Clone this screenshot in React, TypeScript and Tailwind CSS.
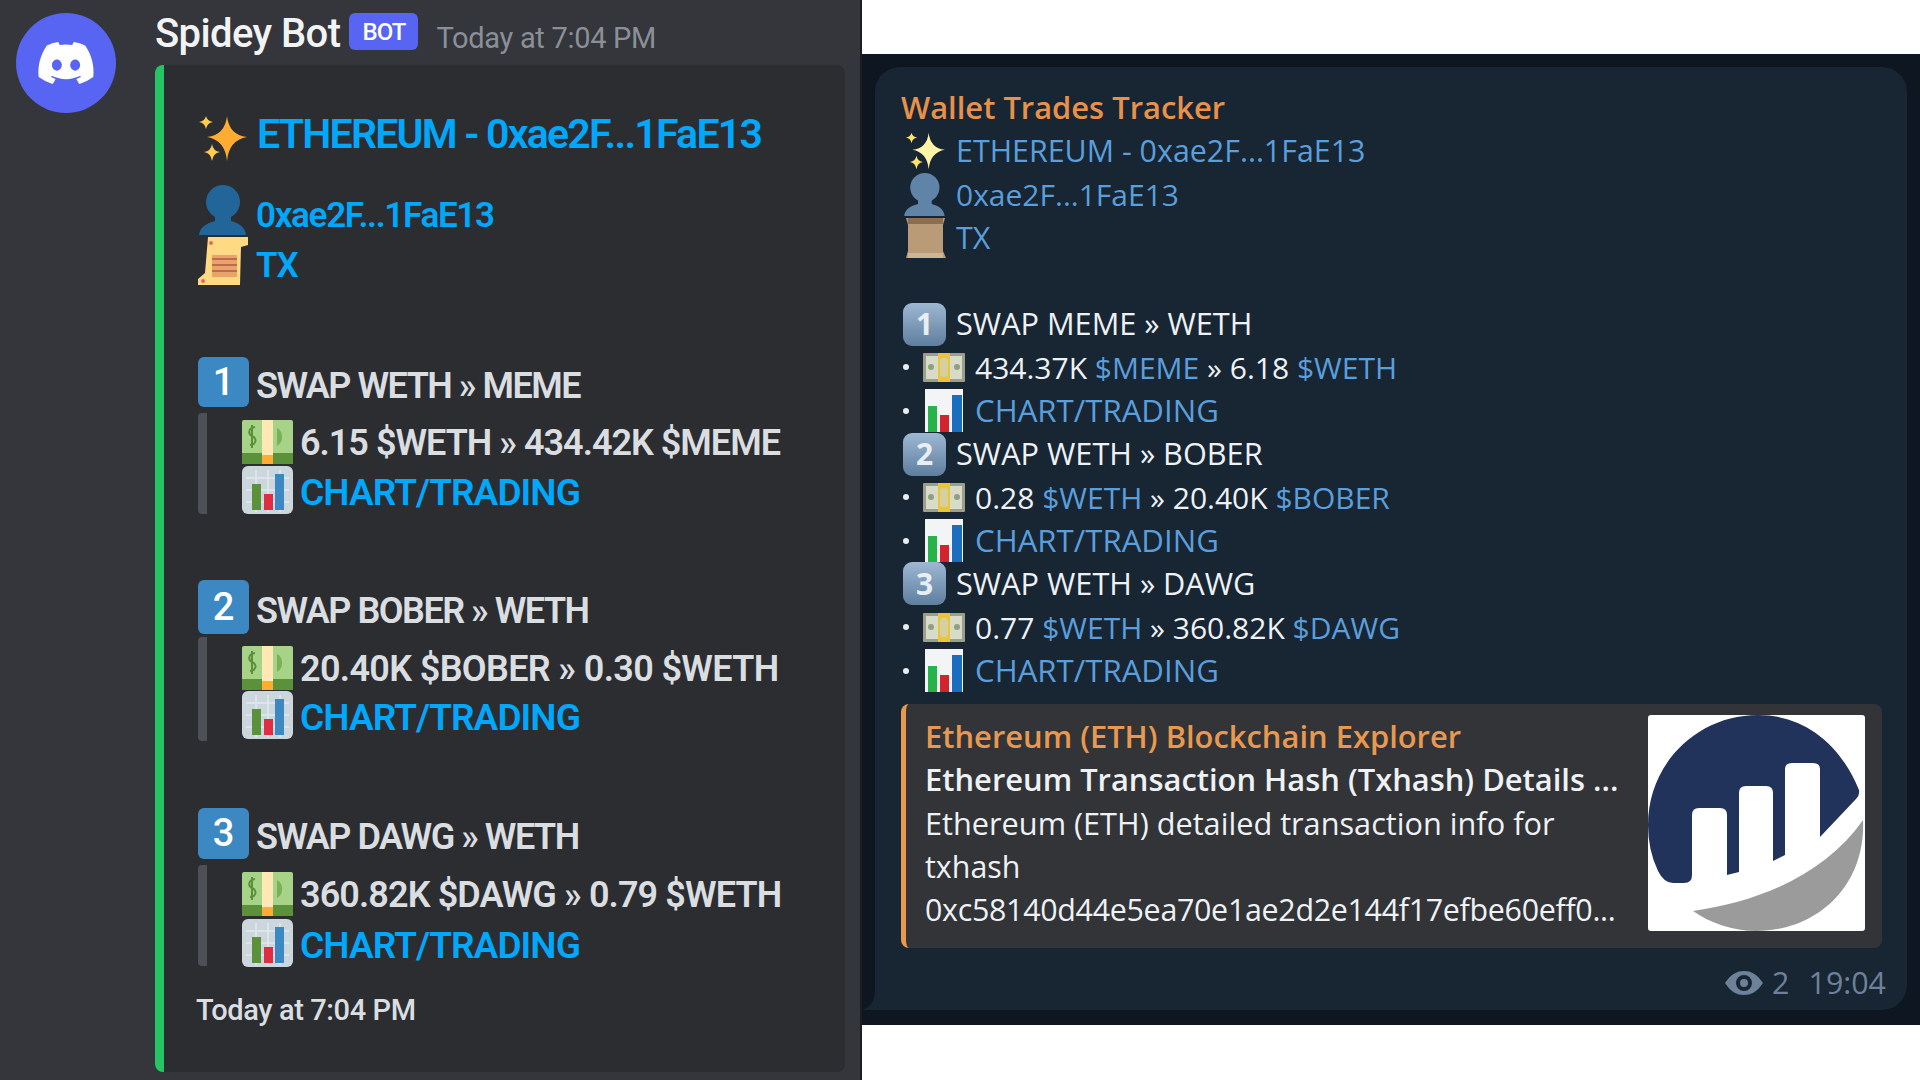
import { FaDiscord } from "react-icons/fa";

const Sparkle = ({ className, small, big }: { className: string; small: string; big: string }) => (
  <svg viewBox="0 0 49 45" className={className}>
    <path d="M29 0 Q31 19 49 21 Q31 24 29 45 Q27 24 9 21 Q27 19 29 0Z" fill={big} />
    <path d="M8 0 Q9 5 15 6 Q9 7 8 13 Q7 7 1 6 Q7 5 8 0Z" fill={small} />
    <path d="M14 28 Q15 35 22 36 Q15 37 14 45 Q13 37 6 36 Q13 35 14 28Z" fill={small} />
  </svg>
);

const Person = ({ className, fill }: { className: string; fill: string }) => (
  <svg viewBox="0 0 48 50" className={className}>
    <ellipse cx="25" cy="17" rx="17" ry="17" fill={fill} />
    <path d="M17 30 H33 V36 C40 38 47 41 48 50 H1 C2 41 10 38 17 36Z" fill={fill} />
  </svg>
);

const DiscordScroll = () => (
  <svg viewBox="0 0 50 52" className="h-[52px] w-[50px] shrink-0">
    <path d="M10 2 H50 V10 L43 12 L42 50 H0 V44 L7 38Z" fill="#ffd983" />
    <path d="M14 20 H39 V42 H14Z" fill="#e7a56b" />
    <path d="M14 24 H39 M14 30 H39 M14 36 H39" stroke="#c1694f" strokeWidth="2" />
    <circle cx="13" cy="8" r="2" fill="#dd6b5a" />
    <circle cx="5" cy="46" r="2" fill="#dd6b5a" />
  </svg>
);

const TgScroll = () => (
  <svg viewBox="0 0 41 42" className="h-[42px] w-[41px] shrink-0">
    <path d="M1 1 H40 L38 8 V34 L41 41 H1 L3 34 V8Z" fill="#b99b78" />
    <path d="M3 1 H38 V7 H3Z" fill="#8a6f53" />
    <path d="M3 36 H38 V41 H3Z" fill="#cdb596" />
  </svg>
);

const Money = () => (
  <svg viewBox="0 0 51 44" className="h-[44px] w-[51px] shrink-0">
    <rect width="51" height="44" rx="2" fill="#a6d388" />
    <rect y="33" width="51" height="11" fill="#5c913b" />
    <rect x="20" width="11" height="44" fill="#ffe8b6" />
    <rect x="20" y="35" width="11" height="9" fill="#ffac33" />
    <path d="M35 8 A9 10 0 0 1 35 26Z" fill="#77b255" />
    <path d="M13 7 C6 8 6 14 10 16 C15 18 15 24 8 25 M10 5 V28" stroke="#5c913b" strokeWidth="2" fill="none" />
  </svg>
);

const DiscordChart = () => (
  <svg viewBox="0 0 51 48" className="h-[48px] w-[51px] shrink-0">
    <rect width="51" height="48" rx="6" fill="#ccd6dd" />
    <path d="M4 12 H47 M4 24 H47 M4 36 H47 M14 4 V46 M26 4 V46 M38 4 V46" stroke="#e1e8ed" strokeWidth="1.5" />
    <rect x="10" y="18" width="9" height="26" fill="#5c913b" />
    <rect x="22" y="28" width="9" height="16" fill="#dd2e44" />
    <rect x="33" y="8" width="9" height="36" fill="#3b88c3" />
  </svg>
);

const TgMoney = () => (
  <svg viewBox="0 0 42 29" className="h-[29px] w-[42px] shrink-0">
    <rect width="42" height="29" rx="1" fill="#9b9f8e" />
    <rect x="3" y="3" width="36" height="23" fill="#d7dbc8" />
    <rect x="15" width="12" height="29" fill="#e8c53a" />
    <rect x="17" y="5" width="8" height="19" rx="3" fill="#d6cfa0" />
    <circle cx="8" cy="14" r="3" fill="#8f9f80" />
    <circle cx="34" cy="14" r="3" fill="#8f9f80" />
  </svg>
);

const TgChart = () => (
  <svg viewBox="0 0 38 43" className="h-[43px] w-[38px] shrink-0">
    <rect width="38" height="43" fill="#f2f4f5" />
    <rect x="3" y="17" width="9" height="26" fill="#27b34a" />
    <rect x="15" y="26" width="9" height="17" fill="#d3232e" />
    <rect x="27" y="6" width="10" height="37" fill="#1a6dbf" />
  </svg>
);

const Eye = () => (
  <svg viewBox="0 0 38 24" className="h-[24px] w-[38px]">
    <path fillRule="evenodd" d="M0 12 C6 3 12 0 19 0 C26 0 32 3 38 12 C32 21 26 24 19 24 C12 24 6 21 0 12Z M19 4 A8 8 0 1 0 19 20 A8 8 0 1 0 19 4Z" fill="#6d8299" />
    <circle cx="19" cy="12" r="4" fill="#6d8299" />
  </svg>
);

const EtherscanLogo = () => (
  <svg viewBox="0 0 217 216" className="h-[216px] w-[217px] shrink-0 rounded-[3px] bg-white">
    <path d="M0 110 C0 48 50 0 110 0 C155 0 192 28 211 75 Q212 80 208 84 L172 122 L172 54 Q172 48 165 48 L144 48 Q137 48 137 54 L137 140 L125 146 L125 78 Q125 71 118 71 L98 71 Q91 71 91 78 L91 157 L79 160 L79 100 Q79 93 72 93 L51 93 Q44 93 44 100 L44 160 Q44 168 36 168 L25 168 Q16 168 10 156 Q0 135 0 110Z" fill="#21325b" />
    <path d="M45 196 C120 185 180 155 215 105 C218 170 170 216 108 216 C85 216 62 208 45 196Z" fill="#9b9b9b" />
  </svg>
);

const discordBlocks = [
  {
    n: "1",
    title: "SWAP WETH » MEME",
    trade: "6.15 $WETH » 434.42K $MEME",
    wrap: "mt-[70px]",
    key: "h-[50px]",
    quote: "mt-[6px] h-[101px] pt-[7px]",
    gap: "mt-[2px]",
    track: "tracking-[-1px]",
  },
  {
    n: "2",
    title: "SWAP BOBER » WETH",
    trade: "20.40K $BOBER » 0.30 $WETH",
    wrap: "mt-[66px]",
    key: "h-[54px]",
    quote: "mt-[3px] h-[104px] pt-[9px]",
    gap: "mt-[1px]",
    track: "tracking-[-0.65px]",
  },
  {
    n: "3",
    title: "SWAP DAWG » WETH",
    trade: "360.82K $DAWG » 0.79 $WETH",
    wrap: "mt-[67px]",
    key: "h-[51px]",
    quote: "mt-[6px] h-[101px] pt-[7px]",
    gap: "mt-[3px]",
    track: "tracking-[-0.9px]",
  },
];

const tgBlocks = [
  { n: "1", title: "SWAP MEME » WETH", a: "434.37K ", at: "$MEME", b: " » 6.18 ", bt: "$WETH" },
  { n: "2", title: "SWAP WETH » BOBER", a: "0.28 ", at: "$WETH", b: " » 20.40K ", bt: "$BOBER" },
  { n: "3", title: "SWAP WETH » DAWG", a: "0.77 ", at: "$WETH", b: " » 360.82K ", bt: "$DAWG" },
];

function DiscordPanel() {
  return (
    <div className="flex h-[1080px] w-[862px] shrink-0 gap-[39px] border-r-2 border-[#1c1d20] bg-[#34363b] pl-4 pt-[13px] font-['Roboto',sans-serif] text-[#dbdee1]">
      <div className="flex h-[100px] w-[100px] shrink-0 items-center justify-center rounded-full bg-[#5865f2] text-white">
        <FaDiscord className="h-[60px] w-[60px]" />
      </div>
      <div className="flex flex-col">
        <div className="flex h-[52px] items-start">
          <span className="mt-[1px] text-[40px] font-medium leading-[40px] tracking-[-0.6px] text-[#f2f3f5]">Spidey Bot</span>
          <span className="ml-[9px] flex h-[37px] w-[69px] items-center justify-center rounded-[6px] bg-[#5865f2] text-[24px] font-medium tracking-[-1px] text-white">BOT</span>
          <span className="ml-[18px] mt-[5px] text-[29px] leading-[40px] tracking-[-0.3px] text-[#8b9098]">Today at 7:04 PM</span>
        </div>
        <div className="flex h-[1007px] w-[690px] flex-col rounded-[8px] border-l-[9px] border-[#25c565] bg-[#2b2d31] pl-[34px] pt-[51px]">
          <div className="flex h-[45px] items-center gap-[10px]">
            <Sparkle className="h-[45px] w-[49px] shrink-0" small="#ffcc4d" big="#ffac33" />
            <span className="mb-[8px] whitespace-nowrap text-[41px] font-semibold tracking-[-1.75px] text-[#00a8fc]">ETHEREUM - 0xae2F...1FaE13</span>
          </div>
          <div className="mt-[24px] flex h-[50px] items-center gap-[10px]">
            <Person className="h-[50px] w-[48px] shrink-0" fill="#226699" />
            <span className="mt-[12px] text-[35px] font-semibold tracking-[-1.3px] text-[#00a8fc]">0xae2F...1FaE13</span>
          </div>
          <div className="flex h-[52px] items-center gap-[8px]">
            <DiscordScroll />
            <span className="mt-[10px] text-[35px] font-semibold tracking-[-1px] text-[#00a8fc]">TX</span>
          </div>
          {discordBlocks.map((b) => (
            <div key={b.n} className={b.wrap}>
              <div className={`flex items-center gap-[7px] ${b.key}`}>
                <div className="flex h-full w-[51px] shrink-0 items-center justify-center rounded-[6px] bg-[#3b88c3] text-[38px] font-medium text-white">{b.n}</div>
                <span className="mt-[7px] text-[36px] font-semibold tracking-[-1.5px]">{b.title}</span>
              </div>
              <div className={`flex flex-col rounded-[4px] border-l-[9px] border-[#4e5058] pl-[35px] ${b.quote}`}>
                <div className="flex h-[44px] items-center gap-[7px]">
                  <Money />
                  <span className={`mt-[1px] whitespace-nowrap text-[36px] font-semibold ${b.track}`}>{b.trade}</span>
                </div>
                <div className={`flex h-[48px] items-center gap-[7px] ${b.gap}`}>
                  <DiscordChart />
                  <span className="mt-[5px] text-[37px] font-semibold tracking-[-0.9px] text-[#00a8fc]">CHART/TRADING</span>
                </div>
              </div>
            </div>
          ))}
          <div className="mt-[28px] ml-[-2px] text-[29px] font-medium leading-[32px] tracking-[-0.4px]">Today at 7:04 PM</div>
        </div>
      </div>
    </div>
  );
}

function TelegramPanel() {
  return (
    <div className="flex h-[1080px] flex-1 flex-col bg-white font-['Open_Sans',sans-serif] text-[30.4px] leading-[43.3px] text-[#eef2f5]">
      <div className="mt-[54px] h-[971px] bg-[#0e1621] pl-[13px] pr-[13px] pt-[13px]">
        <div className="relative h-[943px] rounded-[25px] rounded-bl-none bg-[#182533] pl-[26px] pr-[25px] pt-[19px]">
          <svg viewBox="0 0 13 20" className="absolute bottom-0 left-[-13px] h-[20px] w-[13px]">
            <path d="M13 0 Q13 16 0 20 H13Z" fill="#182533" />
          </svg>
          <div className="text-[30.9px] font-semibold text-[#e8914a]">Wallet Trades Tracker</div>
          <div className="flex h-[43.3px] items-center">
            <Sparkle className="ml-[4px] h-[38px] w-[40px] shrink-0" small="#ffe26b" big="#fff3a8" />
            <span className="ml-[11px] text-[#5a9fdc]">ETHEREUM - 0xae2F...1FaE13</span>
          </div>
          <div className="flex h-[43.3px] items-center">
            <Person className="ml-[1px] h-[43px] w-[44px] shrink-0" fill="#5f84a8" />
            <span className="ml-[10px] text-[30px] text-[#5a9fdc]">0xae2F...1FaE13</span>
          </div>
          <div className="flex h-[43.3px] items-center">
            <div className="ml-[4px]"><TgScroll /></div>
            <span className="ml-[10px] text-[#5a9fdc]">TX</span>
          </div>
          <div className="h-[43.3px]" />
          {tgBlocks.map((b) => (
            <div key={b.n}>
              <div className="flex h-[43.3px] items-center">
                <div className="ml-[2px] flex h-[43px] w-[43px] shrink-0 items-center justify-center rounded-[9px] bg-linear-to-b from-[#9db8d2] to-[#5f7f9f] text-[30px] font-bold text-[#e9eef3]">{b.n}</div>
                <span className="ml-[10px] text-[30.7px]">{b.title}</span>
              </div>
              <div className="flex h-[43.3px] items-center">
                <div className="ml-[2px] h-[6px] w-[6px] shrink-0 rounded-full bg-[#e8edf2]" />
                <div className="ml-[14px]"><TgMoney /></div>
                <span className="ml-[10px] whitespace-pre text-[30px]">
                  {b.a}
                  <span className="text-[#5a9fdc]">{b.at}</span>
                  {b.b}
                  <span className="text-[#5a9fdc]">{b.bt}</span>
                </span>
              </div>
              <div className="flex h-[43.3px] items-center">
                <div className="ml-[2px] h-[6px] w-[6px] shrink-0 rounded-full bg-[#e8edf2]" />
                <div className="ml-[16px]"><TgChart /></div>
                <span className="ml-[12px] text-[31.2px] text-[#5a9fdc]">CHART/TRADING</span>
              </div>
            </div>
          ))}
          <div className="mt-[12px] flex h-[244px] justify-between rounded-[8px] border-l-[5px] border-[#e8994f] bg-[#323438] pl-[19px] pr-[17px] pt-[11px]">
            <div className="whitespace-nowrap">
              <div className="text-[30.9px] font-semibold text-[#e8994f]">Ethereum (ETH) Blockchain Explorer</div>
              <div className="text-[30.9px] font-semibold">Ethereum Transaction Hash (Txhash) Details ...</div>
              <div className="text-[30.7px]">Ethereum (ETH) detailed transaction info for</div>
              <div>txhash</div>
              <div className="tracking-[-0.3px]">0xc58140d44e5ea70e1ae2d2e144f17efbe60eff0...</div>
            </div>
            <EtherscanLogo />
          </div>
          <div className="mr-[-4px] mt-[13px] flex items-center justify-end gap-[9px] text-[#6d8299]">
            <Eye />
            <span>2</span>
            <span className="ml-[10px]">19:04</span>
          </div>
        </div>
      </div>
    </div>
  );
}

export default function App() {
  return (
    <div className="flex h-[1080px] w-[1920px] overflow-hidden">
      <DiscordPanel />
      <TelegramPanel />
    </div>
  );
}
